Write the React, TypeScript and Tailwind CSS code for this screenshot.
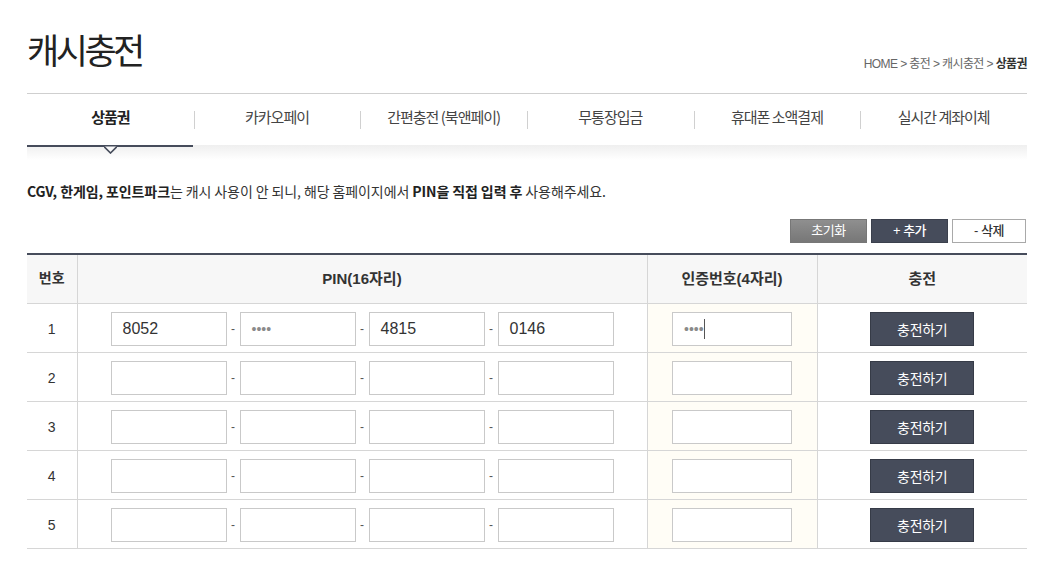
import React from "react";

const tabs = ["상품권", "카카오페이", "간편충전 (북앤페이)", "무통장입금", "휴대폰 소액결제", "실시간 계좌이체"];

type Cell = { value?: string; masked?: boolean };

const rows: { no: number; pins: Cell[]; auth: Cell & { caret?: boolean } }[] = [
    { no: 1, pins: [{ value: "8052" }, { masked: true }, { value: "4815" }, { value: "0146" }], auth: { masked: true, caret: true } },
    { no: 2, pins: [{}, {}, {}, {}], auth: {} },
    { no: 3, pins: [{}, {}, {}, {}], auth: {} },
    { no: 4, pins: [{}, {}, {}, {}], auth: {} },
    { no: 5, pins: [{}, {}, {}, {}], auth: {} },
];

function FakeInput({ cell, width, caret }: { cell: Cell; width: string; caret?: boolean }) {
    return (
        <div className={`${width} h-[34px] bg-white border border-[#c9c9c9] flex items-center pl-[11px] text-[16px] text-[#333]`}>
            {cell.masked ? (
                <span className="text-[14px] text-[#8a8a8a] leading-none">••••</span>
            ) : (
                cell.value
            )}
            {caret && <span className="w-px h-[20px] bg-[#555]" />}
        </div>
    );
}

export default function App() {
    return (
        <div className="min-h-screen bg-white font-['Liberation_Sans','Noto_Sans_CJK_KR',sans-serif] text-[#333]">
            <div className="w-[1000px] ml-[27px]">
                {/* title + breadcrumb */}
                <div className="flex justify-between items-end h-[93px] pb-[23px]">
                    <h1 className="text-[35px] leading-none tracking-[-3.5px] text-[#222] font-normal font-['Noto_Sans_CJK_KR',sans-serif] mb-[4px]">캐시충전</h1>
                    <div className="text-[12px] tracking-[-0.6px] text-[#666] leading-none">
                        HOME &gt; 충전 &gt; 캐시충전 &gt; <span className="text-[#333] font-bold">상품권</span>
                    </div>
                </div>

                {/* tabs */}
                <div className="border-t border-[#cfcfcf]">
                    <div className="grid grid-cols-6 h-[51px]">
                        {tabs.map((t, i) => (
                            <div key={t} className="relative flex items-center justify-center pb-[5px]">
                                {i > 0 && <span className="absolute left-0 top-[17px] w-px h-[18px] bg-[#d0d0d0]" />}
                                <span className={`text-[15px] tracking-[-1px] font-['Noto_Sans_CJK_KR',sans-serif] ${i === 0 ? "font-bold text-[#222]" : "text-[#444]"}`}>{t}</span>
                            </div>
                        ))}
                    </div>
                    <div className="relative h-[15px] bg-gradient-to-b from-[#efefef] to-white">
                        <div className="absolute left-0 top-0 w-[166px] h-[2px] bg-[#464c5b]" />
                        <svg className="absolute left-[77px] top-[1px]" width="13" height="8" viewBox="0 0 13 8">
                            <polygon points="0,0.5 6.5,7 13,0.5" fill="#fafafa" />
                            <polyline points="0,0.5 6.5,7 13,0.5" fill="none" stroke="#464c5b" strokeWidth="1.6" />
                        </svg>
                    </div>
                </div>

                {/* notice */}
                <p className="mt-[21px] text-[14px] tracking-[-0.1px] text-[#333] leading-[20px] font-['Noto_Sans_CJK_KR',sans-serif]">
                    <b className="text-[#222]">CGV, 한게임, 포인트파크</b>는 캐시 사용이 안 되니, 해당 홈페이지에서 <b className="text-[#222]">PIN을 직접 입력 후</b> 사용해주세요.
                </p>

                {/* action buttons */}
                <div className="flex justify-end gap-[4px] mt-[18px] pr-[1px]">
                    <button className="w-[77px] h-[24px] bg-gradient-to-b from-[#8f8f8f] to-[#777] border border-[#777] text-white text-[13px] tracking-[-0.5px]">초기화</button>
                    <button className="w-[77px] h-[24px] bg-[#464c5b] border border-[#3b404d] text-white text-[13px] font-medium tracking-[-0.5px]">+ 추가</button>
                    <button className="w-[74px] h-[24px] bg-white border border-[#a9a9a9] text-[#333] text-[13px] font-medium tracking-[-0.5px]">- 삭제</button>
                </div>

                {/* table */}
                <table className="mt-[10px] w-full border-collapse border-t-2 border-[#464c5b] text-[14px]">
                    <colgroup>
                        <col className="w-[50px]" />
                        <col className="w-[570px]" />
                        <col className="w-[170px]" />
                        <col className="w-[210px]" />
                    </colgroup>
                    <thead>
                        <tr className="h-[49px] bg-[#f7f7f7] border-b border-[#d6d6d6]">
                            <th className="font-bold text-[14px] text-[#333] border-r border-[#d6d6d6]">번호</th>
                            <th className="font-bold text-[15px] text-[#333] border-r border-[#d6d6d6]">PIN(16자리)</th>
                            <th className="font-bold text-[15px] text-[#333] border-r border-[#d6d6d6]">인증번호(4자리)</th>
                            <th className="font-bold text-[15px] text-[#333]">충전</th>
                        </tr>
                    </thead>
                    <tbody>
                        {rows.map((r) => (
                            <tr key={r.no} className="h-[49px] border-b border-[#d6d6d6]">
                                <td className="text-center border-r border-[#d6d6d6] text-[14px] pt-[3px]">{r.no}</td>
                                <td className="border-r border-[#d6d6d6] pl-[33px] pt-[3px]">
                                    <div className="flex items-center">
                                        {r.pins.map((p, i) => (
                                            <React.Fragment key={i}>
                                                {i > 0 && <span className="w-[13px] text-center text-[12px] text-[#555]">-</span>}
                                                <FakeInput cell={p} width="w-[116px]" />
                                            </React.Fragment>
                                        ))}
                                    </div>
                                </td>
                                <td className="border-r border-[#d6d6d6] bg-[#fffdf6] pt-[3px]">
                                    <div className="flex justify-center">
                                        <FakeInput cell={r.auth} width="w-[120px]" caret={r.auth.caret} />
                                    </div>
                                </td>
                                <td className="pt-[3px]">
                                    <div className="flex justify-center">
                                        <button className="w-[104px] h-[34px] bg-[#464c5b] border border-[#363b47] text-white text-[14px] tracking-[-0.3px] font-['Noto_Sans_CJK_KR',sans-serif]">충전하기</button>
                                    </div>
                                </td>
                            </tr>
                        ))}
                    </tbody>
                </table>
            </div>
        </div>
    );
}
